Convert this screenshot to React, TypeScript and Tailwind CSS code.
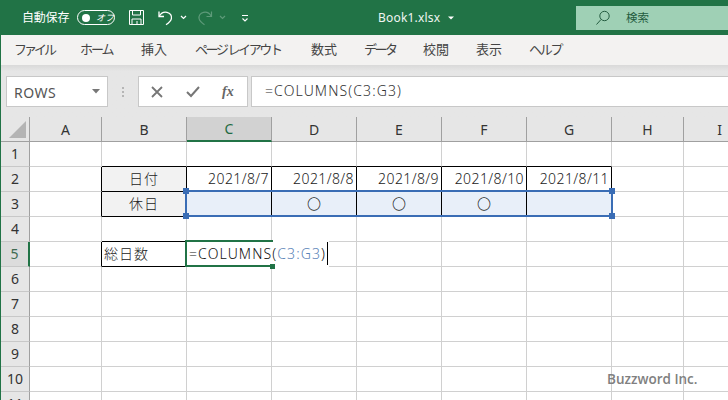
import React from "react";

const FONT = { fontFamily: '"Noto Sans", "Noto Sans CJK JP", sans-serif' };
const cols = ["A", "B", "C", "D", "E", "F", "G", "H", "I"];
const rows = [1, 2, 3, 4, 5, 6, 7, 8, 9, 10, 11];
const tabs: [string, string][] = [
  ["ファイル", "w-[66px] tracking-[-3px]"],
  ["ホーム", "w-[61px] tracking-[-2px]"],
  ["挿入", "w-[54px]"],
  ["ページ レイアウト", "w-[116px] tracking-[-2.4px]"],
  ["数式", "w-[53px]"],
  ["データ", "w-[59px] tracking-[-2.5px]"],
  ["校閲", "w-[53px]"],
  ["表示", "w-[53px]"],
  ["ヘルプ", "w-[60px] tracking-[-2.2px]"],
];

const BLACK = "border-r border-b border-black";
const GRID = "border-r border-b border-[#d0d0d0]";

function cell(r: number, c: string): { t?: string; cls: string } {
  const inTable = ["B", "C", "D", "E", "F", "G"].includes(c);
  if (r === 1 && inTable) return { cls: "border-r border-r-[#d0d0d0] border-b border-b-black" };
  if (r === 4 && c === "B") return { cls: "border-r border-r-[#d0d0d0] border-b border-b-black" };
  if ((r === 2 || r === 3 || r === 5) && c === "A") return { cls: "border-r border-r-black border-b border-b-[#d0d0d0]" };
  if (r === 2) {
    if (c === "B") return { t: "日付", cls: `bg-[#f2f2f2] justify-center tracking-[1px] ${BLACK}` };
    const m: Record<string, string> = { C: "2021/8/7", D: "2021/8/8", E: "2021/8/9", F: "2021/8/10", G: "2021/8/11" };
    if (m[c]) return { t: m[c], cls: `justify-end pr-[2px] tracking-[0.4px] ${BLACK}` };
  }
  if (r === 3) {
    if (c === "B") return { t: "休日", cls: `bg-[#f2f2f2] justify-center tracking-[1px] ${BLACK}` };
    const m: Record<string, string> = { C: "", D: "〇", E: "〇", F: "〇", G: "" };
    if (c in m) return { t: m[c], cls: `bg-[#e8eff9] justify-center ${BLACK}` };
  }
  if (r === 5 && c === "B") return { t: "総日数", cls: `pl-[2px] tracking-[1px] ${BLACK}` };
  return { cls: GRID };
}

export default function App() {
  return (
    <div style={FONT} className="relative flex h-[400px] w-[728px] flex-col overflow-hidden bg-white text-[#3a3a3a]">
      {/* title bar */}
      <div className="flex h-[35px] shrink-0 items-center bg-[#217346] text-[12px] text-white">
        <span className="ml-[22px] w-[50px] whitespace-nowrap tracking-[-0.2px]">自動保存</span>
        <div className="ml-[5px] flex h-[15px] w-[38px] items-center rounded-full border border-white pl-[4px]">
          <span className="h-[8px] w-[8px] rounded-full bg-white" />
          <span className="ml-[6px] text-[9px] italic leading-none">オフ</span>
        </div>
        <svg className="ml-[13px]" width="17" height="17" viewBox="0 0 17 17" fill="none" stroke="#fff" strokeWidth="1">
          <path d="M1.5 1.5h14v14h-14z" />
          <path d="M4.5 1.5v4.5h8v-4.5M4 15.5v-5.5h9v5.5M9 12v3.5" />
        </svg>
        <svg className="ml-[12px]" width="18" height="18" viewBox="0 0 18 18" fill="none" stroke="#fff" strokeWidth="1.3">
          <path d="M2 2.5v5h5" />
          <path d="M2.3 7.2C4 4 7 2.7 10 3.3c3.4.7 5 3.6 4.4 6.4-.6 2.6-2.8 4.4-5.4 6" />
        </svg>
        <svg className="ml-[5px]" width="7" height="5" viewBox="0 0 7 5" fill="none" stroke="#fff" strokeWidth="1.2">
          <path d="M1 1l2.5 2.5L6 1" />
        </svg>
        <svg className="ml-[9px]" width="18" height="18" viewBox="0 0 18 18" fill="none" stroke="#5d9a79" strokeWidth="1.2">
          <path d="M15.5 2.5v5h-5" />
          <path d="M15.2 7.2C13.5 4 10.5 2.7 7.5 3.3 4.1 4 2.5 6.9 3.1 9.7c.6 2.6 2.8 4.4 5.4 6" />
        </svg>
        <svg className="ml-[5px]" width="7" height="5" viewBox="0 0 7 5" fill="none" stroke="#5d9a79" strokeWidth="1.2">
          <path d="M1 1l2.5 2.5L6 1" />
        </svg>
        <svg className="ml-[15px]" width="8" height="8" viewBox="0 0 8 8" fill="none" stroke="#fff" strokeWidth="1.1">
          <path d="M1 1.5h6M1.5 4.5L4 7l2.5-2.5" />
        </svg>
        <span className="ml-[129px] w-[66px] whitespace-nowrap text-[12px] tracking-[0.2px] text-[#f0f5f2]">Book1.xlsx</span>
        <svg className="ml-[4px]" width="6" height="4" viewBox="0 0 6 4" fill="#fff">
          <path d="M0 .5h6L3 3.5z" />
        </svg>
        <div className="ml-[122px] mt-[6px] flex h-[24px] flex-1 items-center self-start bg-[#9fd0b5] text-[#245c40]">
          <svg className="ml-[19px]" width="16" height="16" viewBox="0 0 16 16" fill="none" stroke="#245c40" strokeWidth="1">
            <circle cx="9.5" cy="6" r="4.7" />
            <path d="M6 9.5L1.5 14.5" />
          </svg>
          <span className="ml-[15px] text-[11.5px]">検索</span>
        </div>
      </div>

      {/* ribbon tabs */}
      <div className="flex h-[30px] shrink-0 items-center border-l border-[#217346] bg-[#f3f2f1] pl-[3px] text-[13px] text-[#444]">
        {tabs.map(([t, w]) => (
          <span key={t} className={`${w} whitespace-nowrap pl-[10px]`}>{t}</span>
        ))}
      </div>

      {/* formula bar */}
      <div className="flex h-[52px] shrink-0 flex-col border-l border-[#217346] bg-gradient-to-b from-[#d9d9d9] from-0% via-[#e6e6e6] via-[12%] to-[#e6e6e6]">
        <div className="mt-[11px] flex h-[31px] items-stretch">
          <div className="ml-[5px] flex w-[102px] items-center justify-between border border-[#c8c8c8] bg-white pl-[7px] pr-[7px] text-[14px] tracking-[0.5px] text-[#555]">
            <span className="mt-[2px]">ROWS</span>
            <svg width="8" height="5" viewBox="0 0 8 5" fill="#777">
              <path d="M0 0h8L4 4.5z" />
            </svg>
          </div>
          <div className="ml-[13px] flex w-[3px] flex-col items-center justify-center gap-[2px]">
            <span className="h-[2px] w-[2px] bg-[#b5b5b5]" />
            <span className="h-[2px] w-[2px] bg-[#b5b5b5]" />
            <span className="h-[2px] w-[2px] bg-[#b5b5b5]" />
          </div>
          <div className="ml-[14px] flex w-[110px] items-center border border-[#c8c8c8] bg-white">
            <svg className="ml-[12px]" width="12" height="12" viewBox="0 0 12 12" fill="none" stroke="#767676" strokeWidth="1.8">
              <path d="M1 1l10 10M11 1L1 11" />
            </svg>
            <svg className="ml-[23px]" width="14" height="12" viewBox="0 0 14 12" fill="none" stroke="#767676" strokeWidth="2">
              <path d="M1 6l4 4 8-9" />
            </svg>
            <span className="ml-[22px] text-[14px] font-bold italic text-[#666]" style={{ fontFamily: '"Liberation Serif", serif' }}>fx</span>
          </div>
          <div className="ml-[3px] flex flex-1 items-center border-y border-l border-[#c8c8c8] bg-white pb-[2px] pl-[13px] text-[14px] font-light tracking-[1.1px] text-[#333]">
            =COLUMNS(C3:G3)
          </div>
        </div>
      </div>

      {/* sheet */}
      <div className="relative flex-1 border-l border-[#217346]">
        <div className="grid grid-cols-[29px_72px_85px_85px_85px_85px_85px_85px_72px_72px] grid-rows-[25px_repeat(11,25px)]">
          <div className="relative border-r border-b border-[#a0a0a0] bg-[#e6e6e6]">
            <span className="absolute bottom-[3px] right-[3px] h-0 w-0 border-b-[17px] border-l-[17px] border-b-[#b4b4b4] border-l-transparent" />
          </div>
          {cols.map((c) => (
            <div
              key={c}
              className={
                c === "C"
                  ? "flex items-center justify-center border-r border-b-2 border-r-[#a0a0a0] border-b-[#217346] bg-[#d2d2d2] text-[14px] text-[#1f6b42]"
                  : "flex items-center justify-center border-r border-b border-[#a0a0a0] bg-[#e6e6e6] text-[14px] text-[#333]"
              }
            >
              {c}
            </div>
          ))}
          {rows.map((r) => (
            <React.Fragment key={r}>
              <div
                className={
                  r === 5
                    ? "flex items-center justify-center border-r-2 border-b border-r-[#217346] border-b-[#c8c8c8] bg-[#dcdcdc] pb-[1px] text-[14px] text-[#3f6b52]"
                    : "flex items-center justify-center border-r border-b border-r-[#a0a0a0] border-b-[#c8c8c8] bg-[#e6e6e6] pb-[1px] text-[14px] text-[#333]"
                }
              >
                {r}
              </div>
              {cols.map((c) => {
                const d = cell(r, c);
                return (
                  <div key={c} className={`flex items-center whitespace-nowrap pb-[1px] text-[14px] font-light text-[#222] ${d.cls}`}>
                    {d.t}
                  </div>
                );
              })}
            </React.Fragment>
          ))}
        </div>

        {/* range selection */}
        <div className="absolute left-[184px] top-[73px] h-[27px] w-[428px] border-2 border-[#3a6db5]">
          <span className="absolute -left-[4px] -top-[4px] h-[6px] w-[6px] bg-[#3a6db5]" />
          <span className="absolute -right-[4px] -top-[4px] h-[6px] w-[6px] bg-[#3a6db5]" />
          <span className="absolute -bottom-[4px] -left-[4px] h-[6px] w-[6px] bg-[#3a6db5]" />
          <span className="absolute -bottom-[4px] -right-[4px] h-[6px] w-[6px] bg-[#3a6db5]" />
        </div>

        {/* active cell in edit mode */}
        <div className="absolute left-[184px] top-[123px] flex h-[27px] items-center whitespace-nowrap bg-white pl-[4px] pr-[1px] text-[14px] font-light tracking-[1.1px] text-[#111]">
          <span>=COLUMNS(</span>
          <span className="text-[#5b84b8]">C3:G3</span>
          <span>)</span>
          <span className="ml-[1px] h-[23px] w-px bg-black" />
          <span className="absolute left-0 top-0 h-[27px] w-[2px] bg-[#217346]" />
          <span className="absolute left-0 top-0 h-[2px] w-[88px] bg-[#217346]" />
          <span className="absolute bottom-0 left-0 h-[2px] w-[88px] bg-[#217346]" />
          <span className="absolute -bottom-[2px] left-[85px] h-[5px] w-[5px] bg-[#217346]" />
        </div>

        {/* watermark */}
        <span className="absolute left-[606px] top-[252px] text-[13.5px] font-semibold text-[#808080]" style={{ fontFamily: '"Open Sans", sans-serif' }}>
          Buzzword Inc.
        </span>
      </div>
    </div>
  );
}
